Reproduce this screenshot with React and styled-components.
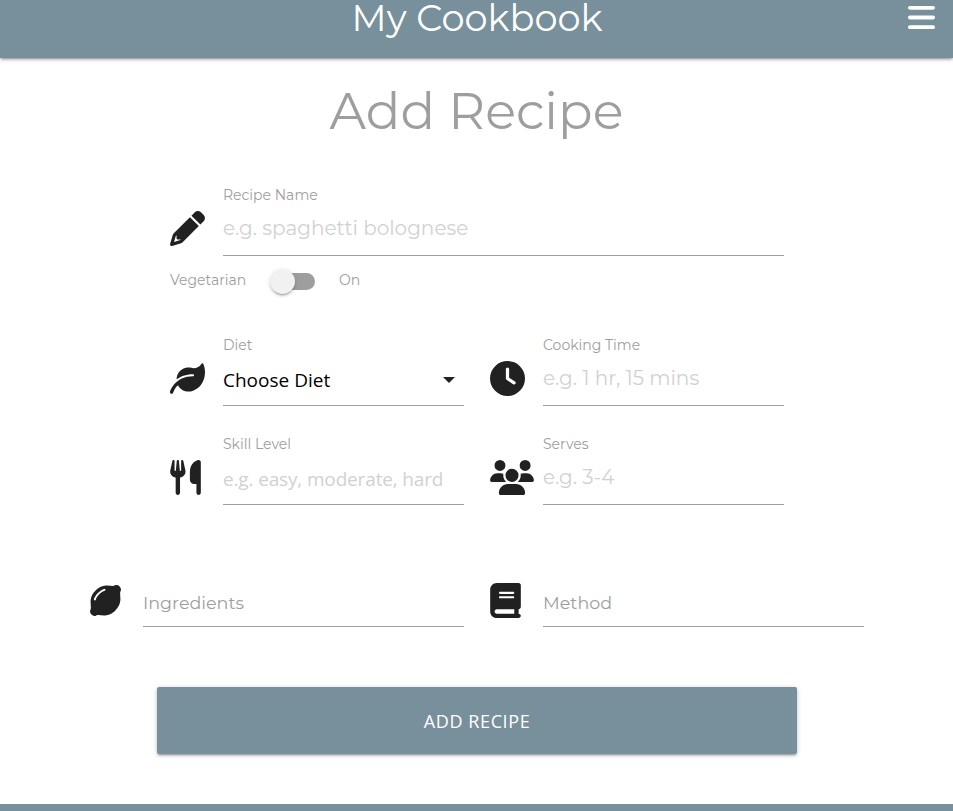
import React from "react";
import styled, { createGlobalStyle } from "styled-components";
import { FaLemon } from "react-icons/fa";
import { FaBars, FaBook, FaClock, FaUsers, FaUtensils } from "react-icons/fa6";

const slate = "#78909b";
const grey = "#9e9e9e";
const display = `Montserrat, Inter, "Liberation Sans", sans-serif`;
const body = `"Segoe UI", "Open Sans", "Noto Sans", sans-serif`;
const raised =
  "0 2px 2px 0 rgba(0,0,0,.14), 0 3px 1px -2px rgba(0,0,0,.12), 0 1px 5px 0 rgba(0,0,0,.2)";

const GlobalStyle = createGlobalStyle`
  *, *::before, *::after { box-sizing: border-box; }
  body { margin: 0; background: #fff; overflow: hidden; font-family: ${display}; }
`;

const Page = styled.div`
  display: flex;
  flex-direction: column;
  height: 811px;
`;

const Header = styled.header`
  display: grid;
  grid-template-columns: 1fr auto 1fr;
  height: 58px;
  padding: 0 17px 0 18px;
  background: ${slate};
  color: #fff;
  box-shadow: ${raised};
`;

const Brand = styled.a`
  grid-column: 2;
  height: 36px;
  font-size: 36.75px;
  line-height: 36px;
  white-space: nowrap;
`;

const MenuButton = styled.button`
  justify-self: end;
  height: 35px;
  padding: 0;
  margin-right: 1px;
  border: 0;
  background: none;
  color: inherit;
  svg { display: block; width: 27px; height: 31px; }
`;

const Title = styled.h1`
  height: 60px;
  margin: 23px 0 44px;
  color: ${grey};
  font-size: 51px;
  font-weight: 400;
  line-height: 61px;
  text-align: center;
`;

const Form = styled.form`
  display: flex;
  flex-direction: column;
`;

const Row = styled.div`
  display: grid;
  grid-template-columns: ${(p) => (p.$single ? "1fr" : "1fr 1fr")};
  column-gap: 26px;
  width: ${(p) => (p.$wide ? 774 : 614)}px;
  margin: ${(p) => p.$top || 0}px 0 0 ${(p) => (p.$wide ? 90 : 170)}px;
`;

const Field = styled.div`
  display: grid;
  grid-template-columns: 53px minmax(0, 1fr);
`;

const IconSlot = styled.span`
  display: flex;
  align-items: center;
  height: 35px;
  margin-top: ${(p) => (p.$compact ? 0.4 : 26.4)}px;
  color: #212121;
  svg {
    flex: none;
    width: ${(p) => p.$width || 35}px;
    height: ${(p) => p.$height || 35}px;
  }
`;

const Control = styled.div`
  display: flex;
  flex-direction: column;
`;

const Label = styled.label`
  height: 20px;
  color: ${grey};
  font-size: 14px;
  line-height: 20px;
  white-space: nowrap;
`;

const Input = styled.input`
  width: 100%;
  height: 51px;
  padding: ${(p) => (p.$plain ? "3px" : "0")} 0 4px;
  border: 0;
  border-bottom: 1px solid ${grey};
  border-radius: 0;
  outline: 0;
  background: none;
  font-family: ${(p) => (p.$plain ? body : display)};
  font-size: ${(p) => (p.$plain ? 19 : 20)}px;
  letter-spacing: ${(p) => (p.$plain ? "-0.15px" : "0")};
  &::placeholder { color: #d1d1d1; opacity: 1; }
`;

const Select = styled.button`
  display: flex;
  align-items: center;
  justify-content: space-between;
  height: 51px;
  padding: 0 9px 0 0;
  border: 0;
  border-bottom: 1px solid ${grey};
  background: none;
  color: #000;
  font-family: ${body};
  font-size: 19px;
`;

const Caret = styled.span`
  border: 6px solid transparent;
  border-top-color: #212121;
  border-bottom: 0;
`;

const TextBox = styled.div`
  height: 44px;
  border-bottom: 1px solid ${grey};
  color: ${grey};
  font-size: 17.5px;
  line-height: 40px;
`;

const SwitchRow = styled.div`
  display: flex;
  align-items: center;
  height: 25px;
  margin: 13px 0 0 170px;
`;

const SwitchLabel = styled(Label)`
  width: ${(p) => p.$width}px;
  height: 23px;
`;

const Track = styled.span`
  display: flex;
  align-items: center;
  width: 42px;
  height: 17px;
  margin: 0 24px 0 30px;
  border-radius: 9px;
  background: ${grey};
`;

const Thumb = styled.span`
  flex: none;
  width: 25px;
  height: 25px;
  margin-left: -3px;
  border-radius: 50%;
  background: #f1f1f1;
  box-shadow: 0 3px 1px -2px rgba(0,0,0,.2), 0 2px 2px 0 rgba(0,0,0,.14), 0 1px 5px 0 rgba(0,0,0,.12);
`;

const Submit = styled.button`
  width: 640px;
  height: 67px;
  margin: 60px 0 0 157px;
  padding: 0;
  border: 0;
  border-radius: 2px;
  background: ${slate};
  color: #fff;
  box-shadow: ${raised};
  font-family: ${body};
  font-size: 18px;
  letter-spacing: 0.6px;
`;

const Footer = styled.footer`
  height: 7px;
  margin-top: auto;
  background: ${slate};
`;

const PencilIcon = () => (
  <svg viewBox="0 0 512 512" fill="currentColor">
    <path d="M421.7 220.3L188.5 453.4L154.6 419.5L158.1 416H112C103.2 416 96 408.8 96 400V353.9L92.51 357.4C87.78 362.2 84.31 368 82.42 374.4L59.44 452.6L137.6 429.6C143.1 427.7 149.8 424.2 154.6 419.5L188.5 453.4C178.1 463.8 165.2 471.5 151.1 475.6L30.77 511C22.35 513.5 13.24 511.2 7.03 504.1C.82 498.8-1.5 489.7 .98 481.2L36.37 360.9C40.53 346.8 48.16 333.9 58.57 323.5L291.7 90.34L421.7 220.3zM492.7 58.75C517.7 83.74 517.7 124.3 492.7 149.3L444.3 197.7L314.3 67.72L362.7 19.32C387.7-5.68 428.3-5.68 453.3 19.32L492.7 58.75z" />
  </svg>
);

const LeafIcon = () => (
  <svg viewBox="0 0 512 512" fill="currentColor">
    <path d="M512 165.4c0 127.9-70.05 235.3-175.3 270.1c-20.04 7.94-41.83 12.46-64.69 12.46c-64.9 0-125.2-36.51-155.7-94.47c-54.13 49.93-68.71 107-68.96 108.1C44.72 472.6 34.87 480 24.02 480c-1.84 0-3.73-.22-5.6-.66c-12.89-3.1-20.84-16.08-17.75-28.96c9.6-39.5 90.47-226.4 335.3-226.4C344.8 224 352 216.8 352 208S344.8 192 336 192C228.6 192 151 226.6 96.29 267.6c.19-10.82 1.24-21.84 3.54-33.05c13.47-65.81 66.04-119 131.4-134.2c28.33-6.56 55.68-6.01 80.93 0c56 13.32 118.2-7.41 149.3-61.24c5.66-9.83 20.02-9.52 24.66 .83C502.7 76.76 512 121.9 512 165.4z" />
  </svg>
);

function TextField({ icon: Icon, iconWidth, label, placeholder, plain }) {
  return (
    <Field>
      <IconSlot $width={iconWidth}><Icon /></IconSlot>
      <Control>
        <Label>{label}</Label>
        <Input placeholder={placeholder} $plain={plain} />
      </Control>
    </Field>
  );
}

function AreaField({ icon: Icon, iconWidth, iconHeight, label }) {
  return (
    <Field>
      <IconSlot $compact $width={iconWidth} $height={iconHeight}><Icon /></IconSlot>
      <TextBox>{label}</TextBox>
    </Field>
  );
}

export default function App() {
  return (
    <Page>
      <GlobalStyle />
      <Header>
        <Brand>My Cookbook</Brand>
        <MenuButton type="button" aria-label="Menu"><FaBars /></MenuButton>
      </Header>
      <Title>Add Recipe</Title>
      <Form>
        <Row $single>
          <TextField icon={PencilIcon} label="Recipe Name" placeholder="e.g. spaghetti bolognese" />
        </Row>
        <SwitchRow>
          <SwitchLabel $width={73}>Vegetarian</SwitchLabel>
          <Track><Thumb /></Track>
          <SwitchLabel $width={30}>On</SwitchLabel>
        </SwitchRow>
        <Row $top={41}>
          <Field>
            <IconSlot><LeafIcon /></IconSlot>
            <Control>
              <Label>Diet</Label>
              <Select type="button">Choose Diet<Caret /></Select>
            </Control>
          </Field>
          <TextField icon={FaClock} label="Cooking Time" placeholder="e.g. 1 hr, 15 mins" />
        </Row>
        <Row $top={28}>
          <TextField icon={FaUtensils} iconWidth={31} label="Skill Level" placeholder="e.g. easy, moderate, hard" plain />
          <TextField icon={FaUsers} iconWidth={44} label="Serves" placeholder="e.g. 3-4" />
        </Row>
        <Row $wide $top={78}>
          <AreaField icon={FaLemon} iconWidth={31} iconHeight={31} label="Ingredients" />
          <AreaField icon={FaBook} iconWidth={31} label="Method" />
        </Row>
        <Submit type="button">ADD RECIPE</Submit>
      </Form>
      <Footer />
    </Page>
  );
}
